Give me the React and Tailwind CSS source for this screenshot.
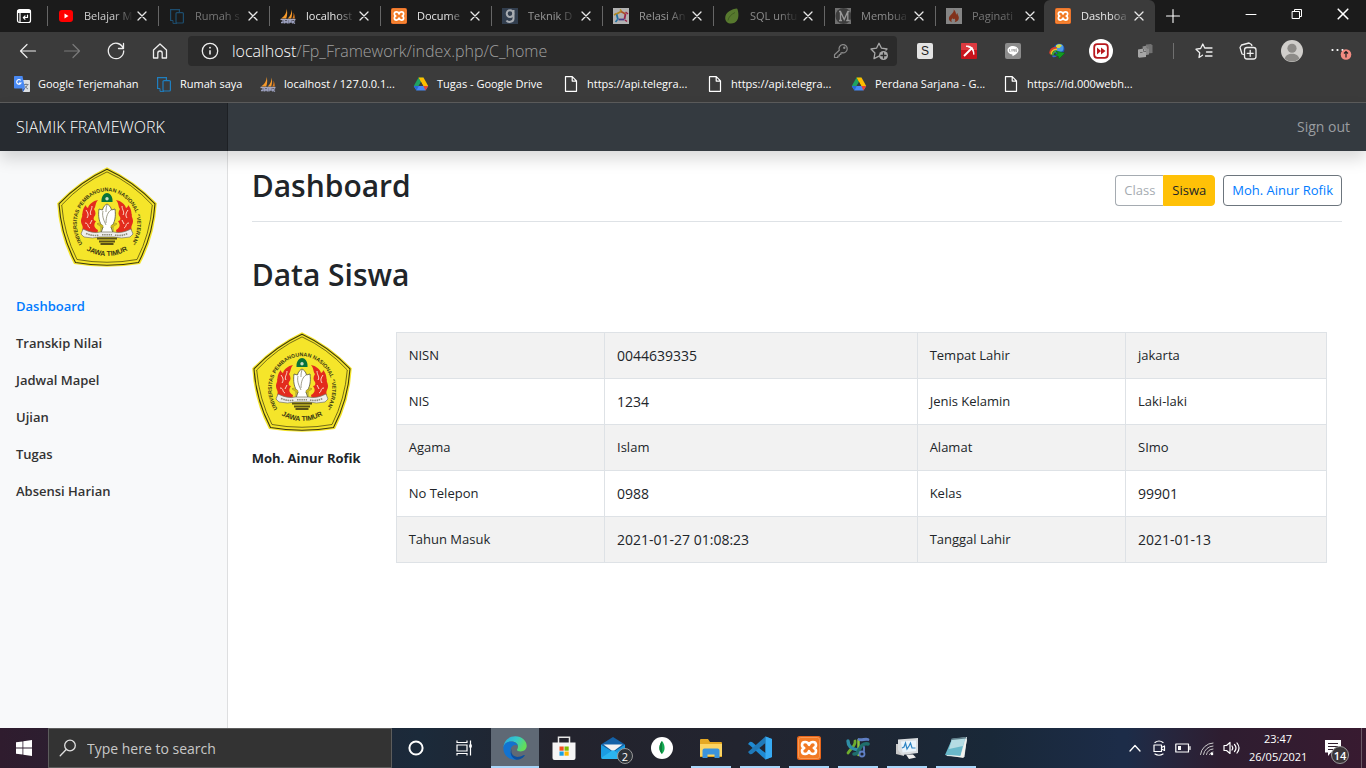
import React from "react";

const line = { fill: "none", stroke: "currentColor", strokeLinecap: "round", strokeLinejoin: "round" };

/* ---------- favicons and brand marks ---------- */

function YouTube() {
  return (
    <svg viewBox="0 0 16 16" className="size-4">
      <rect x="1" y="2" width="14" height="12" rx="3" fill="#f00" />
      <path d="M6.5 5.5v5L10.500 8z" fill="#fff" />
    </svg>
  );
}

function Devices() {
  return (
    <svg viewBox="0 0 16 16" className="size-4" fill="none" stroke="#1f7fc0" strokeWidth="1.2">
      <path d="M4 12.500H1.600V1.600h8.800V4" />
      <path d="M4 15.400V12.500M4 15.400h4" strokeWidth="1" />
      <rect x="7" y="4.600" width="7.400" height="10.400" rx="1" />
    </svg>
  );
}

function Sails() {
  return (
    <svg viewBox="0 0 16 16" className="size-4">
      <path d="M6.500 0.500C7 4 5 8 1 10.500h5.200C7.500 7 7.500 3.500 6.500 0.500z" fill="#f79a2a" />
      <path d="M11.500 1.500c.2 3-1 6.500-3.800 9h3.500c1-3 1.200-6 .3-9z" fill="#f79a2a" />
      <path d="M13.500 4.500c.3 2 0 4-1.200 6h2.500c0-2-.3-4-1.300-6z" fill="#e07b1b" />
      <path d="M0.500 11.500h15" stroke="#a9a9bd" strokeWidth="1.300" />
      <path d="M1 14.500h2V12M4.500 15.500v-3l1.500 2 1.500-2v3M9 15.500v-3h2V14H9M12.500 12.500v3M15 12.500 12.800 14 15 15.500" stroke="#9a9ebc" strokeWidth="1.300" fill="none" />
    </svg>
  );
}

function Xampp({ className = "size-4" }) {
  return (
    <svg viewBox="0 0 24 24" className={className}>
      <rect width="24" height="24" rx="2.500" fill="#e8651a" />
      <rect x="1.500" y="1.500" width="21" height="21" rx="2" fill="#f27a24" stroke="#f9a463" strokeWidth="0.800" />
      <path
        d="M12 8.800C10.800 5 5 5 5 9c0 1.500.9 2.500 2.200 3C5.900 12.500 5 13.500 5 15c0 4 5.800 4 7 .2 1.200 3.800 7 3.800 7-.2 0-1.500-.9-2.500-2.200-3 1.300-.5 2.200-1.500 2.200-3 0-4-5.800-4-7-.2z"
        fill="none"
        stroke="#fff"
        strokeWidth="2.600"
        strokeLinejoin="round"
      />
    </svg>
  );
}

function LetterG() {
  return (
    <svg viewBox="0 0 16 16" className="size-4">
      <rect width="16" height="16" fill="#3a4a60" />
      <circle cx="8" cy="5.600" r="3.300" fill="none" stroke="#d8dde4" strokeWidth="2" />
      <path d="M11.500 2v8.800c0 3.500-5.500 4-7 1.700" fill="none" stroke="#d8dde4" strokeWidth="2" />
    </svg>
  );
}

function Relation() {
  return (
    <svg viewBox="0 0 16 16" className="size-4" fill="none" strokeWidth="1.800">
      <rect width="16" height="16" fill="#f2f2f2" />
      <path d="M3.500 6 8 3.500" stroke="#f4b51e" />
      <path d="M8 3.500 12.500 6" stroke="#e8662a" />
      <path d="m12.500 6-1 5" stroke="#d3265a" />
      <path d="M11.500 11.500h-6" stroke="#5b48b8" />
      <path d="M5 11.500 3.500 6" stroke="#2295d8" />
      <path d="M1 7 3.500 5.500M7 1.500l1.500 1.500" stroke="#f4b51e" strokeWidth="1.500" />
      <path d="m12.500 4 2.500 2M12 12l2 1.500" stroke="#d3265a" strokeWidth="1.500" />
      <path d="M4.500 11.500 2.500 14" stroke="#2295d8" strokeWidth="1.500" />
    </svg>
  );
}

function Leaf() {
  return (
    <svg viewBox="0 0 16 16" className="size-4">
      <path d="M13 .5C8 1 1.200 4 1.200 10c0 3.500 2.500 5.500 5.800 5.500 5.500 0 8-4.500 7.300-10.500C14 3 13.800 1.500 13 .5z" fill="#80b83c" />
      <path d="M11 4.500C7 6.500 4.500 9 4 12.500" stroke="#5a8a28" fill="none" />
    </svg>
  );
}

function LetterM() {
  return (
    <svg viewBox="0 0 16 16" className="size-4">
      <rect width="16" height="16" fill="#aaa" />
      <circle cx="8.500" cy="8" r="8" fill="#555" />
      <path d="M4 12.500h3M5.500 12.500v-9l3.700 8 3.600-8v9M4 3.500h2M11.200 12.500h3.600M12.500 3.500h2" stroke="#eee" strokeWidth="1.300" fill="none" />
    </svg>
  );
}

function Flame() {
  return (
    <svg viewBox="0 0 16 16" className="size-4">
      <rect width="16" height="16" fill="#eee" />
      <path d="M7.500 1.500c1.500 3-3.500 5-4.500 8-.6 2.500 1 4 3 4.700-1.200-1.500-.5-3 .7-3.900.3 1.300 1.300 1.300 1.600.2 1.300 1.200 1.300 2.700.2 3.700 3-.6 4.700-2.700 4.300-5-.3-2-1.500-2.700-1.300-4.200-1 .5-1.300 1.400-1.200 2.500C10 5 9.500 2.500 7.500 1.500z" fill="#e8481c" />
    </svg>
  );
}

function Translate() {
  return (
    <svg viewBox="0 0 16 16" className="size-4">
      <path d="M6 4h9.300a.7.7 0 0 1 .7.700v10.600a.7.7 0 0 1-.7.700H9z" fill="#dcdfe3" />
      <path d="M9.500 8.500h5M12 7.500v1M13.500 8.500c-.5 2-2 3.500-3.500 4.500M10.500 9.500c.7 1.500 2 2.800 3.500 3.500" stroke="#6f7780" strokeWidth="0.900" fill="none" />
      <path d="M.7 0h7.800L11 12.500H.7A.7.7 0 0 1 0 11.800V.7A.7.700 0 0 1 .7 0z" fill="#4a8af4" />
      <path d="M6.700 4.300A2.300 2.300 0 1 0 7 7H5" stroke="#fff" strokeWidth="1.100" fill="none" />
      <path d="m8 12.500 1 3.500 2-3.500z" fill="#2a5fc4" />
    </svg>
  );
}

function Drive() {
  return (
    <svg viewBox="0 0 16 16" className="size-4">
      <path d="M5.500 1.500 8 6 3.500 14.500.8 10z" fill="#1ea362" />
      <path d="M5.500 1.500h5L8 6z" fill="#11863e" />
      <path d="M10.500 1.500 15.200 10h-5L5.500 1.500z" fill="#fdbd00" />
      <path d="M.8 10h14.400l-2.700 4.500h-9z" fill="#4688f4" />
      <path d="M.8 10h5l-2.300 4.500z" fill="#2a66d8" />
      <path d="M10.300 10h4.900l-2.700 4.500z" fill="#e94335" />
      <path d="M5.500 10 8 6l2.300 4z" fill="#3b3b3b" />
    </svg>
  );
}

function Page() {
  return (
    <svg viewBox="0 0 16 16" className="size-4" {...line} strokeWidth="1.200">
      <path d="M2.500.7h6.800l4.200 4.200v10.400h-11zM9.200.9v4.200h4.200" />
    </svg>
  );
}

function Cross({ className = "size-2.5" }) {
  return (
    <svg viewBox="0 0 10 10" className={className} {...line} strokeWidth="1.300">
      <path d="m1 1 8 8M9 1 1 9" />
    </svg>
  );
}

/* ---------- browser window ---------- */

const tabs = [
  { title: "Belajar M", Icon: YouTube, text: "text-[#d0d0d0]", icon: "" },
  { title: "Rumah s", Icon: Devices, text: "text-[#777]", icon: "opacity-50" },
  { title: "localhost", Icon: Sails, text: "text-[#e8e8e8]", icon: "" },
  { title: "Docume", Icon: Xampp, text: "text-[#e8e8e8]", icon: "" },
  { title: "Teknik D", Icon: LetterG, text: "text-[#999]", icon: "opacity-75" },
  { title: "Relasi An", Icon: Relation, text: "text-[#999]", icon: "opacity-70" },
  { title: "SQL untu", Icon: Leaf, text: "text-[#8c8c8c]", icon: "opacity-60" },
  { title: "Membua", Icon: LetterM, text: "text-[#8c8c8c]", icon: "opacity-60" },
  { title: "Paginati", Icon: Flame, text: "text-[#777]", icon: "opacity-50" },
];

function Tab({ title, Icon, text, icon, active }) {
  return (
    <div
      className={
        active
          ? "flex h-8 w-[111px] shrink-0 items-center rounded-t-md bg-[#3b3b3b] pl-[11px]"
          : "flex h-5 w-[111px] min-w-0 items-center border-l border-[#666] pl-2.5 last:w-[109px]"
      }
    >
      <span className={`shrink-0 ${icon}`}>
        <Icon />
      </span>
      <button
        className={`ml-2.5 w-[49px] shrink-0 overflow-hidden whitespace-nowrap text-left text-[11px] mask-r-from-60% mask-r-to-100% ${text}`}
      >
        {title}
      </button>
      <button aria-label={`Close ${title}`} className="ml-1 shrink-0 text-[#e8e8e8]">
        <Cross />
      </button>
    </div>
  );
}

function TabStrip() {
  return (
    <div className="flex h-8 items-center bg-[#1b1b1b]">
      <button aria-label="Tab actions" className="flex w-[47px] shrink-0 justify-center text-white">
        <svg viewBox="0 0 16 16" className="size-4" {...line} strokeWidth="1.200">
          <rect x="1.500" y="1.500" width="13" height="13" rx="2" />
          <path d="M1.500 3.500h13" strokeWidth="3" strokeLinecap="butt" />
          <path d="M4 5v9" strokeLinecap="butt" />
          <path d="M11.500 7v2.500h-4M9 8 7.300 9.600 9 11.200" />
        </svg>
      </button>
      <div className="flex min-w-0 items-center">
        {tabs.map((t) => (
          <Tab key={t.title} {...t} />
        ))}
      </div>
      <Tab title="Dashboa" Icon={Xampp} text="text-[#e8e8e8]" icon="" active />
      <button aria-label="New tab" className="ml-2.5 text-white">
        <svg viewBox="0 0 16 16" className="size-4" {...line} strokeWidth="1.100">
          <path d="M8 1.500v13M1.500 8h13" />
        </svg>
      </button>
      <div className="mb-1 ml-auto flex text-white">
        <button aria-label="Minimize" className="flex w-[46px] justify-center">
          <svg viewBox="0 0 12 12" className="size-3" {...line}>
            <path d="M1 6.500h10" />
          </svg>
        </button>
        <button aria-label="Restore" className="flex w-[46px] justify-center">
          <svg viewBox="0 0 12 12" className="size-3" {...line} strokeLinejoin="miter">
            <path d="M1.500 3.500h7v7h-7zM3.500 3.500v-2h7v7h-2" />
          </svg>
        </button>
        <button aria-label="Close window" className="flex w-[46px] justify-center">
          <Cross className="size-3" />
        </button>
      </div>
    </div>
  );
}

function ToolButton({ label, children, className = "" }) {
  return (
    <button aria-label={label} className={`flex w-11 shrink-0 items-center justify-center ${className}`}>
      {children}
    </button>
  );
}

function Toolbar() {
  return (
    <div className="flex h-[38px] items-center pl-1.5 text-[#eee]">
      <ToolButton label="Back">
        <svg viewBox="0 0 20 20" className="size-5" {...line} strokeWidth="1.200">
          <path d="M17.500 10H2.500M9 3.500 2.500 10 9 16.500" />
        </svg>
      </ToolButton>
      <ToolButton label="Forward" className="text-[#7a7a7a]">
        <svg viewBox="0 0 20 20" className="size-5" {...line} strokeWidth="1.200">
          <path d="M2.500 10h15M11 3.500l6.500 6.500L11 16.500" />
        </svg>
      </ToolButton>
      <ToolButton label="Reload">
        <svg viewBox="0 0 20 20" className="size-5" {...line} strokeWidth="1.300">
          <path d="M17.300 7.500A7.700 7.700 0 1 0 17.700 10M17.500 2.500v5h-5" />
        </svg>
      </ToolButton>
      <ToolButton label="Home">
        <svg viewBox="0 0 20 20" className="size-5" {...line} strokeWidth="1.300">
          <path d="M3.500 9 10 3l6.500 6v8h-4.300v-4.800a2.200 2.200 0 0 0-4.400 0V17H3.500z" />
        </svg>
      </ToolButton>
      <div className="ml-1.5 flex h-[30px] min-w-0 flex-1 items-center rounded bg-[#2b2b2b] pr-2 pl-3">
        <svg viewBox="0 0 20 20" className="size-5 shrink-0" {...line} strokeWidth="1.300">
          <circle cx="10" cy="10" r="7.700" />
          <path d="M10 9.300v4.200" strokeWidth="1.600" strokeLinecap="butt" />
          <path d="M10 6.600v.1" strokeWidth="1.800" />
        </svg>
        <label htmlFor="address" className="ml-3 text-base leading-6 font-light text-white">
          localhost
        </label>
        <input
          id="address"
          defaultValue="/Fp_Framework/index.php/C_home"
          className="min-w-0 flex-1 bg-transparent text-base leading-6 font-light text-[#a0a0a0] outline-none"
        />
        <button aria-label="Saved password" className="text-[#8a8a8a]">
          <svg viewBox="0 0 16 16" className="size-4" {...line} strokeWidth="1.200">
            <path d="M6.300 7.200A4.100 4.100 0 1 1 9 9.700L7.800 10v1.500H6.300V13H4.800v1.500H1.500v-2.700z" />
            <circle cx="11.300" cy="4.700" r=".6" />
          </svg>
        </button>
        <button aria-label="Add favorite" className="ml-5 text-[#a8a8a8]">
          <svg viewBox="0 0 20 20" className="size-5" {...line} strokeWidth="1.300">
            <path d="M10 15.200 5 17.600l.9-5.600L2 8l5.500-.8L10 2.300l2.500 4.900L18 8l-1 1" />
            <circle cx="14.500" cy="14.500" r="4.500" fill="currentColor" stroke="none" />
            <path d="M14.500 12v5M12 14.500h5" stroke="#2b2b2b" />
          </svg>
        </button>
      </div>
      <div className="ml-1.5 flex">
        <ToolButton label="Extension S">
          <svg viewBox="0 0 16 16" className="size-4">
            <rect width="16" height="16" rx="2" fill="#e4e4e4" />
            <text x="8" y="12.300" textAnchor="middle" fontSize="12" fontFamily="Liberation Sans, sans-serif" fill="#222">S</text>
          </svg>
        </ToolButton>
        <ToolButton label="Extension pickaxe">
          <svg viewBox="0 0 16 16" className="size-4">
            <rect width="16" height="16" rx="1" fill="#c8141c" />
            <path d="M0 1a1 1 0 0 1 1-1h14a1 1 0 0 1 1 1v6H0z" fill="#dd3a40" />
            <path d="M3 13 11.500 4.500" stroke="#fff" strokeWidth="1.900" />
            <path d="M5 3.200c4-1 8.600 1.800 7.800 8.300C12.500 7.500 10 4.200 5 3.200z" fill="#fff" stroke="#fff" />
          </svg>
        </ToolButton>
        <ToolButton label="Extension Line">
          <svg viewBox="0 0 16 16" className="size-4">
            <rect width="16" height="16" rx="2" fill="#8c8c8c" />
            <path d="M8 3c-3.200 0-5.500 1.900-5.500 4.300 0 2.100 1.900 3.900 4.700 4.200.5.100.2 1 .2 1.800 2.500-1.200 6.100-3.500 6.100-6C13.500 4.900 11.200 3 8 3z" fill="#fff" />
            <path d="M4.500 6v2.500h1M6.800 6v2.500M8 8.500V6l1.500 2.500V6M12 6h-1.200v2.500H12M10.800 7.300H12" stroke="#999" strokeWidth=".7" fill="none" />
          </svg>
        </ToolButton>
        <ToolButton label="Extension downloader">
          <svg viewBox="0 0 16 16" className="size-4">
            <circle cx="10" cy="6" r="5.500" fill="#1e55b4" />
            <circle cx="10.500" cy="5" r="4" fill="#4a98e6" />
            <path d="M7 2.500c2-1.500 4.500-1.600 6 0L10.500 5H7z" fill="#cfd848" />
            <path d="M.8 10.500C.8 6.500 4 4.300 8 5" stroke="#e23b2a" strokeWidth="1.600" fill="none" />
            <path d="M2.200 11.500C2.200 8 5 5.900 8 6.600" stroke="#f6c224" strokeWidth="1.600" fill="none" />
            <path d="M3.700 12.500c0-3 1.800-4.500 4.500-4.300" stroke="#35b43c" strokeWidth="1.600" fill="none" />
            <path d="M3.500 13.300c3 .5 4.500-1 5-3" stroke="#3a62d8" strokeWidth="1.600" fill="none" />
            <path d="m7 8 9 2-6 6-.5-2.500-4-1.500 3.500-1.500z" fill="#129a20" stroke="#0a5c12" strokeWidth=".5" />
          </svg>
        </ToolButton>
        <ToolButton label="Extension player">
          <svg viewBox="0 0 24 24" className="size-6">
            <circle cx="12" cy="12" r="12" fill="#fff" />
            <rect x="5.200" y="5.200" width="13.600" height="13.600" rx="3" fill="#fff" stroke="#b8191e" strokeWidth="1.800" />
            <path d="m8 8.500 4 3.500-4 3.500zM12 8.500l4.500 3.500-4.500 3.500z" fill="#b8191e" />
          </svg>
        </ToolButton>
        <ToolButton label="Extension pages">
          <svg viewBox="0 0 16 16" className="size-4">
            <path d="M9 1.500 14 1l1.500 1.500V10l-5 .5z" fill="#727272" />
            <path d="M5.500 3.500 10 2.500l2 2v7l-5 1z" fill="#8c8c8c" />
            <path d="M1 6.500 6.500 5.500 9 8v6l-7 .8-1-1z" fill="#a6a6a6" />
            <path d="M3 9.500h2.500M6.500 6v2.500H9M10 3v2h2" fill="none" stroke="#6a6a6a" />
          </svg>
        </ToolButton>
      </div>
      <span className="ml-1.5 h-4 w-px bg-[#707070]" />
      <div className="ml-2 flex">
        <ToolButton label="Favorites">
          <svg viewBox="0 0 20 20" className="size-5" {...line} strokeWidth="1.300">
            <path d="M8.500 14.200 5 16.500l.7-4.700L2 8.200l4.600-.7L8.800 3l1.900 4H18M12.500 11H18M11.500 15H18" />
          </svg>
        </ToolButton>
        <ToolButton label="Collections">
          <svg viewBox="0 0 20 20" className="size-5" {...line} strokeWidth="1.300">
            <path d="M5.500 13.500 4 13 2 6.500 3.500 4 11 2l2.500 1.500.4 1.200" />
            <rect x="6.500" y="6.500" width="11.500" height="11.500" rx="2.500" />
            <path d="M12.200 9.300v6M9.200 12.300h6" />
          </svg>
        </ToolButton>
        <ToolButton label="Profile">
          <svg viewBox="0 0 24 24" className="size-[22px]">
            <circle cx="12" cy="12" r="12" fill="#d0cecb" />
            <circle cx="12" cy="9" r="5" fill="#8d8b88" />
            <path d="M4 20.500c1-7.500 15-7.500 16 0A12 12 0 0 1 4 20.500z" fill="#8d8b88" />
          </svg>
        </ToolButton>
        <button aria-label="Settings and more" className="ml-4 mr-3.5 flex">
          <svg viewBox="0 0 22 20" className="h-5 w-[22px]">
            <path d="M2.500 10v.01M7.500 10v.01M12.500 10v.01" stroke="#fff" strokeWidth="2.200" strokeLinecap="round" />
            <circle cx="16" cy="14.500" r="5.300" fill="#f28b82" />
            <path d="M16 17.500v-5.700M14 13.500l2-2 2 2" fill="none" stroke="#222" strokeWidth="1.200" />
          </svg>
        </button>
      </div>
    </div>
  );
}

const bookmarks = [
  { title: "Google Terjemahan", Icon: Translate, width: "w-[142px]" },
  { title: "Rumah saya", Icon: Devices, width: "w-[104px]" },
  { title: "localhost / 127.0.0.1...", Icon: Sails, width: "w-[153px]" },
  { title: "Tugas - Google Drive", Icon: Drive, width: "w-[150px]" },
  { title: "https://api.telegra...", Icon: Page, width: "w-36" },
  { title: "https://api.telegra...", Icon: Page, width: "w-36" },
  { title: "Perdana Sarjana - G...", Icon: Drive, width: "w-[152px]" },
  { title: "https://id.000webh...", Icon: Page, width: "w-36" },
];

function Bookmarks() {
  return (
    <nav aria-label="Bookmarks" className="flex h-[33px] items-center overflow-hidden border-b border-[#5c5c5c] pb-1 pl-3.5 text-white">
      {bookmarks.map(({ title, Icon, width }, i) => (
        <a key={i} href="#" className={`flex items-center gap-2 whitespace-nowrap text-[11px] ${width}`}>
          <Icon />
          {title}
        </a>
      ))}
    </nav>
  );
}

/* ---------- university emblem ---------- */

function Emblem({ id }) {
  const ring = `${id}-ring`;
  const base = `${id}-base`;
  return (
    <svg viewBox="0 0 100 100" className="size-[100px] shrink-0" role="img" aria-label="UPN Veteran Jawa Timur">
      <defs>
        <path id={ring} d="M27 79C17 65 17 46 29 34C41 21 59 21 71 34C83 46 83 65 73 79" />
        <path id={base} d="M27 82Q50 96 73 82" />
      </defs>
      <path d="M50 .3Q77 13 99.800 36.200Q98 69 83 97Q50 102.500 17 97Q2 69 .2 36.200Q23 13 50 .3z" fill="#f5e52a" />
      <path d="M50 2.200Q76 14 98 36.800Q96 68 81.500 95.500Q50 101 18.500 95.500Q4 68 2 36.800Q24 14 50 2.200z" fill="none" stroke="#3b3710" strokeWidth="1.100" />
      <path d="M50 4.900Q75 16 95.300 38Q93 67 80 92.500Q50 98 20 92.500Q7 67 4.700 38Q25 16 50 4.900z" fill="none" stroke="#3b3710" strokeWidth=".7" />
      <g fontFamily="Liberation Sans Narrow, Liberation Sans, sans-serif" fontWeight="700" fill="#3b3812">
        <text fontSize="5.300">
          <textPath href={`#${ring}`} startOffset="50%" textAnchor="middle">UNIVERSITAS PEMBANGUNAN NASIONAL “VETERAN”</textPath>
        </text>
        <text fontSize="7">
          <textPath href={`#${base}`} startOffset="50%" textAnchor="middle">JAWA TIMUR</textPath>
        </text>
      </g>
      <g fill="#e32b1d">
        <path d="M41 33c-5 1-9 4-10 8-2-1-2-2-2-3-4 4-3 8-4 10 1 1-1 3-1 6 0 4 3 5 1 9 5 5 11 5 15 5l1-5c-5-3-4-6-2-9-2 0-3-2-2-4 2-2 2-5 0-8 2-2 1-6 4-9z" />
        <path d="M59 33c5 1 9 4 10 8 2-1 2-2 2-3 4 4 3 8 4 10-1 1 1 3 1 6 0 4-3 5-1 9-5 5-11 5-15 5l-1-5c5-3 4-6 2-9 2 0 3-2 2-4-2-2-2-5 0-8-2-2-1-6-4-9z" />
      </g>
      <path d="M29 43c2 3 3 5 1 8M35 39c0 4-3 6-1 9M28 56c4 0 2 4 5 5M35 53l-2 4M71 43c-2 3-3 5-1 8M65 39c0 4 3 6 1 9M72 56c-4 0-2 4-5 5M65 53l2 4" fill="none" stroke="#fbd9c8" strokeWidth="1" />
      <path d="M44.500 35c-.5-6 3-9 5.500-9s6 3 5.500 9z" fill="#08733a" />
      <circle cx="50" cy="31.700" r="1.700" fill="#c9dfc4" />
      <path d="M50 37c-2 1-4 3-4.500 6L42 42c-1 7 0 14 4 18l-2 6c3 2 9 2 12 0l-2-6c4-4 5-11 4-18l-3.500 1c-.5-3-2.500-5-4.500-6z" fill="#fff" stroke="#55533e" strokeWidth=".8" />
      <path d="M46 44c-1 4 0 8 3 14M54 43c-3 2-5 6-5 13M50 38c-1 3-1 5-1 7M44 66v-6M56 66v-6" fill="none" stroke="#77745a" strokeWidth=".7" />
      <path d="m40 57 6 4v-2.500L41 56zM60 57l-6 4v-2.500L59 56z" fill="#d6c31d" stroke="#7b7120" strokeWidth=".4" />
      <path d="M26 62q10 5 17 3h14q7 2 17-3l2 5-3 3q-9 2-16 0H43q-7 2-16 0l-3-3z" fill="#eee" stroke="#77745a" strokeWidth=".7" />
      <path d="M29 66.500q8 3 13 1.500M45 67.800h10M58 68q6 1.500 13-1.500" fill="none" stroke="#8e8b78" strokeWidth="1.600" strokeDasharray="1.500 .7" />
      <path d="M40 71.500h20M42 74.500h16M43.500 77h13" stroke="#5a5216" strokeWidth="1.800" />
    </svg>
  );
}

/* ---------- site ---------- */

const menu = ["Dashboard", "Transkip Nilai", "Jadwal Mapel", "Ujian", "Tugas", "Absensi Harian"];

const rows = [
  ["NISN", "0044639335", "Tempat Lahir", "jakarta"],
  ["NIS", "1234", "Jenis Kelamin", "Laki-laki"],
  ["Agama", "Islam", "Alamat", "SImo"],
  ["No Telepon", "0988", "Kelas", "99901"],
  ["Tahun Masuk", "2021-01-27 01:08:23", "Tanggal Lahir", "2021-01-13"],
];

function Site() {
  return (
    <div className="flex flex-1 flex-col bg-white text-[13px] text-[#212529]">
      <header className="relative z-10 flex h-12 items-center bg-[#343a40] shadow-[0_8px_16px_rgba(0,0,0,0.15)]">
        <a href="#" className="flex h-full w-1/6 items-center bg-black/25 px-4 text-base font-light text-white shadow-[inset_-1px_0_0_rgba(0,0,0,0.25)]">
          SIAMIK FRAMEWORK
        </a>
        <a href="#" className="ml-auto px-4 text-sm text-[#9a9da0]">Sign out</a>
      </header>
      <div className="flex flex-1">
        <aside className="w-1/6 shrink-0 bg-[#f8f9fa] pt-4 shadow-[inset_-1px_0_0_rgba(0,0,0,0.1)]">
          <div className="pl-[57px]">
            <Emblem id="side" />
          </div>
          <nav className="mt-[21px]">
            {menu.map((m, i) => (
              <a
                key={m}
                href="#"
                className={`block px-4 py-2 leading-[21px] font-semibold ${i === 0 ? "text-[#007bff]" : "text-[#333]"}`}
              >
                {m}
              </a>
            ))}
          </nav>
        </aside>
        <main className="min-w-0 flex-1 px-6 pt-4">
          <div className="flex items-center justify-between border-b border-[#dee2e6] pb-2">
            <h1 className="mb-2 text-[30px] leading-[38px] font-semibold">Dashboard</h1>
            <div className="flex gap-2 leading-[21px]">
              <div className="flex">
                <button disabled className="rounded-l border border-r-0 border-[#a5abb1] px-2 py-1 text-[#a5abb1]">Class</button>
                <button className="rounded-r border border-[#ffc107] bg-[#ffc107] px-2 py-1">Siswa</button>
              </div>
              <button className="rounded border border-[#6c757d] px-2 py-1 text-[#007bff]">Moh. Ainur Rofik</button>
            </div>
          </div>
          <h2 className="mt-[34px] text-[30px] leading-[38px] font-semibold">Data Siswa</h2>
          <div className="mt-[38px] flex pr-[15px]">
            <div className="w-36 shrink-0">
              <Emblem id="student" />
              <p className="mt-4 leading-[21px] font-bold">Moh. Ainur Rofik</p>
            </div>
            <table className="w-full table-fixed border-collapse">
              <colgroup>
                <col className="w-[22.4%]" />
                <col className="w-[33.6%]" />
                <col className="w-[22.4%]" />
                <col />
              </colgroup>
              <tbody>
                {rows.map((r) => (
                  <tr key={r[0]} className="odd:bg-[#f2f2f2]">
                    {r.map((c) => (
                      <td key={c} className={`border border-[#dee2e6] p-3 leading-[21px] ${/^\d/.test(c) ? "text-[14px]" : "text-[13px]"}`}>
                        {c}
                      </td>
                    ))}
                  </tr>
                ))}
              </tbody>
            </table>
          </div>
        </main>
      </div>
    </div>
  );
}

/* ---------- taskbar ---------- */

function Edge() {
  return (
    <svg viewBox="0 0 24 24" className="size-6">
      <defs>
        <linearGradient id="edge-a" x1="0" y1="0" x2="1" y2="0.400">
          <stop offset="0" stopColor="#2aa6e0" />
          <stop offset=".55" stopColor="#35c9c9" />
          <stop offset="1" stopColor="#62dd5a" />
        </linearGradient>
      </defs>
      <path d="M.5 11C1 4.500 6 .3 12.300.3 19 .3 23.700 5 23.700 9.800c0 3.500-2.700 5.700-6 5.700-2.400 0-3.700-.8-3.700-1.700 0-.8 1-1.200 1-3.300 0-2.700-2.500-5-6.300-5C4.500 5.500 1.500 7.800.5 11z" fill="url(#edge-a)" />
      <path d="M.4 12C.4 8 4 5.500 8 5.500c3.500 0 6 1.700 6.800 4-5-2-7.300 2-7.300 5.500 0 4 3 7.500 6.500 8.500C6 24.700.4 19 .4 12z" fill="#1273d0" />
      <path d="M9 12.500c-2.500 6 3 9 7 8.300 2-.3 4-1.500 5.300-1.800.6 0 .5.600.1 1.100C19 23 16 24 13.500 23.700 8.500 22.500 6 17 9 12.500z" fill="#0d4f9e" />
    </svg>
  );
}

function Store() {
  return (
    <svg viewBox="0 0 24 24" className="size-6">
      <path d="M6.500 7V1.200h11V7" fill="none" stroke="#e8e8e8" strokeWidth="1.500" />
      <path d="M.5 6.500h23V22a2 2 0 0 1-2 2h-19a2 2 0 0 1-2-2z" fill="#f5f5f5" />
      <path d="M7.500 10.500h4.200v4.200H7.500z" fill="#f04e1f" />
      <path d="M12.500 10.500h4.200v4.200h-4.200z" fill="#7fba00" />
      <path d="M7.500 15.500h4.200v4.200H7.500z" fill="#1ba1e2" />
      <path d="M12.500 15.500h4.200v4.200h-4.200z" fill="#fdb900" />
    </svg>
  );
}

function Mail() {
  return (
    <span className="relative">
      <svg viewBox="0 0 24 24" className="size-6">
        <path d="M0 8.500 12 1l12 7.500L12 16z" fill="#1462a8" />
        <path d="M2.500 8.500h19L12 15.500z" fill="#f3f3f3" />
        <path d="M0 8.500 12 16l12-7.500V21a2 2 0 0 1-2 2H2a2 2 0 0 1-2-2z" fill="#1b9de3" />
        <path d="M0 22 12 14l12 8-2 1H2z" fill="#2cb5f0" />
      </svg>
      <span className="absolute -right-2 -bottom-1 flex size-4 items-center justify-center rounded-full border border-[#999] bg-[#2d3238] text-[11px] leading-none text-white">
        2
      </span>
    </span>
  );
}

function Mongo() {
  return (
    <svg viewBox="0 0 24 24" className="size-6">
      <circle cx="12" cy="12" r="11" fill="#fff" />
      <path d="M12 5c3.300 4 3.600 9.500 0 13-3.600-3.500-3.300-9 0-13z" fill="#13aa52" />
      <path d="M12 5c-3.300 4-3.600 9.500 0 13v1.500z" fill="#0c7f3b" />
    </svg>
  );
}

function Explorer() {
  return (
    <svg viewBox="0 0 24 24" className="size-6">
      <path d="M1 4a1 1 0 0 1 1-1h7l2 3h11a1 1 0 0 1 1 1v14H1z" fill="#e5a823" />
      <path d="M1 8h22v12H1z" fill="#fcd462" />
      <path d="M3.500 14.500a2 2 0 0 1 2-2h13a2 2 0 0 1 2 2V22h-5v-3.500h-7V22h-5z" fill="#3b93db" />
    </svg>
  );
}

function VSCode() {
  return (
    <svg viewBox="0 0 24 24" className="size-6">
      <path d="M17.500.5 24 3v18l-6.500 2.500L2 9.500 0 8l2-2.200 2 .3 13.500 11z" fill="#1f8ad2" />
      <path d="M17.500 7 4 17.900l-2 .3L0 16l17.500-15.500z" fill="#2079b8" />
      <path d="M17.500.5 24 3v18l-6.500 2.500z" fill="#37aaf2" />
    </svg>
  );
}

function Bird() {
  return (
    <svg viewBox="0 0 24 24" className="size-6" fill="none" strokeLinecap="round">
      <path d="M9 5c1 5-5 8-7 12" stroke="#6fae2e" strokeWidth="2.800" />
      <path d="M12.500 4v15" stroke="#8cc63f" strokeWidth="2.500" />
      <path d="M2 5c0 5 3 8 10 9" stroke="#2f8ea6" strokeWidth="3.400" />
      <path d="M13 3.500c3 1 6-1 9 0" stroke="#5f7fc4" strokeWidth="2.800" />
      <path d="M22 8c-5-1-7 2-9 6-1 3-3 4-5 4" stroke="#1f6f6c" strokeWidth="3.600" />
      <circle cx="16" cy="18" r="2.500" stroke="#5f7fc4" strokeWidth="1.800" />
      <path d="M18 11v4" stroke="#5f7fc4" strokeWidth="1.800" />
    </svg>
  );
}

function Monitor() {
  return (
    <svg viewBox="0 0 24 24" className="size-6">
      <path d="M1 8h8v12l-8-2z" fill="#c7c7c7" />
      <path d="M3 3.500 23 2v15L7 19 3 14z" fill="#d9dde0" />
      <path d="M6 5.500 21 4.500v10.500L7.500 16.500z" fill="#eaf4fb" />
      <path d="m7 12 2-1 1.500-4L12 13l2-3 1.500-3 1.500 5h3.500" fill="none" stroke="#2d84c4" strokeWidth="1.200" />
      <path d="M11 18.500h7l3 3-7 1.500z" fill="#eee" />
    </svg>
  );
}

function Notepad() {
  return (
    <svg viewBox="0 0 24 24" className="size-6">
      <path d="M8 3 23 1l-2.500 20-18-1z" fill="#d8e4e8" />
      <path d="M8 3 21 2l-4.500 18L1 19z" fill="#69b8c9" />
      <path d="M8 3 21 2l-2 8L5 13z" fill="#b5dce3" />
      <path d="M7.500 2.500 22 1v1.500L7.500 4z" fill="#5d7c88" />
      <path d="m1 19 15.500 1L22 3l1 .5L19.500 22z" fill="#f3f3ee" />
    </svg>
  );
}

function BigXampp() {
  return <Xampp className="size-6" />;
}

const apps = [
  ["Edge", Edge, "active"],
  ["Store", Store],
  ["Mail", Mail],
  ["MongoDB", Mongo],
  ["File Explorer", Explorer, "open"],
  ["VS Code", VSCode, "open"],
  ["XAMPP", BigXampp, "open"],
  ["Workbench", Bird, "open"],
  ["Monitor", Monitor, "open"],
  ["Notepad", Notepad, "open"],
];

function Taskbar() {
  return (
    <footer className="flex h-10 items-stretch text-white">
      <div className="flex min-w-0 flex-1 items-stretch bg-[linear-gradient(90deg,#2f1c2e_0px,#1b2a3a_420px,#23232d_560px,#22242f_740px,#192838_990px,#1c2c48_1120px)]">
        <button aria-label="Start" className="flex w-12 shrink-0 items-center justify-center">
          <svg viewBox="0 0 16 16" className="size-4" fill="#fff">
            <path d="M0 2.300 6.500 1.400v6.200H0zM7.300 1.300 16 0v7.600H7.300zM0 8.400h6.500v6.200L0 13.700zM7.300 8.400H16V16l-8.700-1.300z" />
          </svg>
        </button>
        <div className="flex w-[344px] items-center border border-[#5c5c5c] bg-[#333] pl-2.5">
          <svg viewBox="0 0 18 18" className="size-[18px] shrink-0" {...line} stroke="#e0e0e0" strokeWidth="1.300">
            <circle cx="11" cy="6.500" r="5.300" />
            <path d="M7.200 10.500 1.200 16.800" />
          </svg>
          <input
            aria-label="Type here to search"
            placeholder="Type here to search"
            className="ml-2.5 min-w-0 flex-1 bg-transparent text-[14px] outline-none placeholder:text-[#c8c8c8]"
          />
        </div>
        <button aria-label="Cortana" className="flex w-12 shrink-0 items-center justify-center">
          <svg viewBox="0 0 16 16" className="size-4" fill="none" stroke="#fff" strokeWidth="2">
            <circle cx="8" cy="8" r="6.600" />
          </svg>
        </button>
        <button aria-label="Task View" className="flex w-12 shrink-0 items-center justify-center">
          <svg viewBox="0 0 16 16" className="size-4" fill="none" stroke="#fff" strokeWidth="1.200">
            <path d="M1 .5v2h10v-2M1 15.500v-2h10v2M1 5h10v6H1zM14.500.5v15" />
            <path d="M13.200 4.500h2.600v3h-2.600z" fill="#fff" stroke="none" />
          </svg>
        </button>
        <div className="ml-[3px] flex gap-px">
          {apps.map(([name, Icon, state]) => (
            <button
              key={name}
              aria-label={name}
              className={`flex w-12 flex-col items-center justify-end ${state === "active" ? "bg-[#5f6975]" : ""}`}
            >
              <span className="flex flex-1 items-center">
                <Icon />
              </span>
              <span className={state === "active" ? "-mt-0.5 h-0.5 w-full bg-[#a9d6fa]" : state === "open" ? "-mt-0.5 h-0.5 w-10 bg-[#a9d6fa]" : ""} />
            </button>
          ))}
        </div>
      </div>
      <div className="flex items-center bg-linear-to-r from-[#1c2c48] via-[#2e1d30] via-40% to-[#381a30]">
        <div className="flex gap-2 pr-2">
          <svg viewBox="0 0 16 16" className="size-4" {...line} strokeWidth="1.300">
            <path d="m3 11 5-5.500L13 11" />
          </svg>
          <svg viewBox="0 0 16 16" className="size-4" {...line} strokeWidth="1.200">
            <path d="M4 2.500Q8-.5 12 2.500M4 14q4 2.500 8 0M3 5h7.500v6.500H3zM10.500 7.500 13.500 6v4.500l-3-1.500" />
          </svg>
          <svg viewBox="0 0 16 16" className="size-4" {...line} strokeWidth="1.200">
            <path d="M.8 4h12.700v8H.8zM15 6.500v3" />
            <path d="M3 6h3v4H3z" fill="currentColor" stroke="none" />
          </svg>
          <svg viewBox="0 0 16 16" className="size-4" {...line} strokeWidth="1">
            <path d="M1.500 14.500A13 13 0 0 1 14 3M4.500 14.500A10 10 0 0 1 14 6M7.500 14.500A7 7 0 0 1 14 9M10.500 14.500A4 4 0 0 1 14 12" stroke="#ccc" />
            <circle cx="13" cy="14" r="1.300" fill="currentColor" stroke="none" />
          </svg>
          <svg viewBox="0 0 18 16" className="h-4 w-[18px]" {...line} strokeWidth="1.200">
            <path d="M1 5.500h2.500L7 2.500v11l-3.500-3H1zM9 6q1.500 2 0 4M11.500 4.500q3 3.500 0 7M14 3q4 5 0 10" />
          </svg>
        </div>
        <div className="w-[58px] text-center text-[11px] leading-[18px] whitespace-nowrap">
          <div>23:47</div>
          <div>26/05/2021</div>
        </div>
        <button aria-label="Notifications" className="relative ml-[18px]">
          <svg viewBox="0 0 16 16" className="size-4">
            <path d="M0 0h16v12.500H6L3 16v-3.500H0z" fill="#fff" />
            <path d="M3 3.500h10M3 6.500h10M3 9.500h5" stroke="#33202f" strokeWidth="1.200" />
          </svg>
          <span className="absolute top-1.5 left-1.5 flex size-[18px] items-center justify-center rounded-full border border-[#999] bg-[#3b3538] text-[11px] leading-none font-semibold">
            14
          </span>
        </button>
        <span className="ml-5 h-10 w-[5px] border-l border-[#6b5a66]" />
      </div>
    </footer>
  );
}

export default function App() {
  return (
    <div className="flex min-h-screen flex-col font-['Open_Sans','Noto_Sans',sans-serif]">
      <div className="bg-[#3b3b3b]">
        <TabStrip />
        <Toolbar />
        <Bookmarks />
      </div>
      <Site />
      <Taskbar />
    </div>
  );
}
